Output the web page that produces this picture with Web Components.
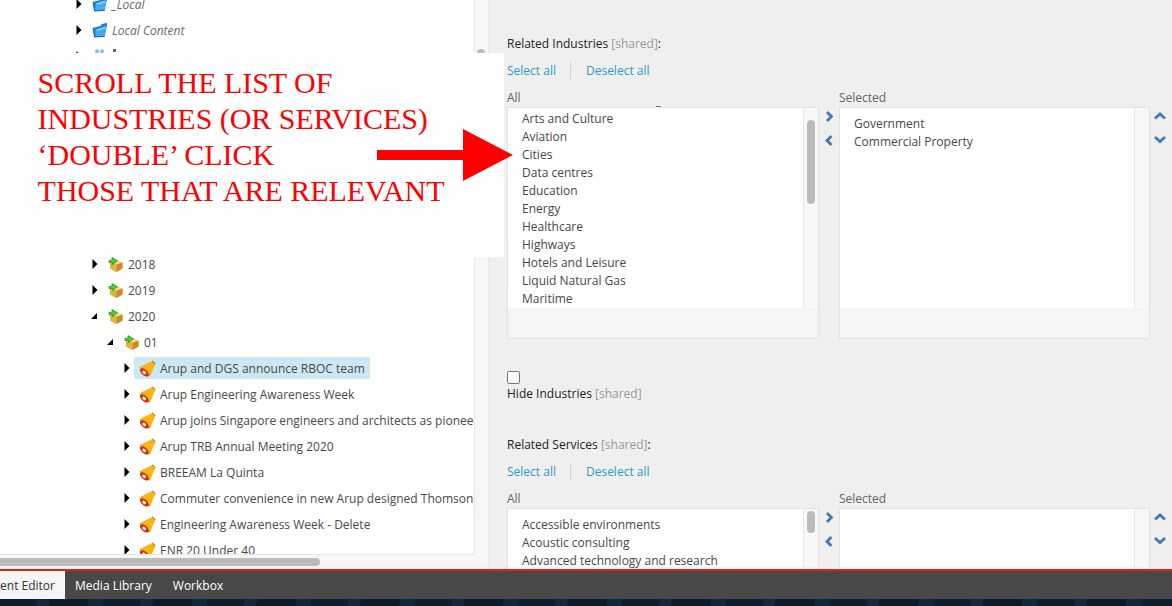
<!DOCTYPE html>
<html><head><meta charset="utf-8">
<style>
html,body{margin:0;padding:0;height:606px;overflow:hidden;background:#0d2033}
body{font-family:"Open Sans",sans-serif;font-size:12px}
</style></head><body>
<app-shell>
  <tree-pane slot="left">
    <tree-row level="0" icon="folder" italic>_Local</tree-row>
    <tree-row level="0" icon="folder" italic>Local Content</tree-row>
    <tree-row level="0" icon="group" mark></tree-row>
    <tree-gap></tree-gap>
    <tree-row level="1" icon="box">2018</tree-row>
    <tree-row level="1" icon="box">2019</tree-row>
    <tree-row level="1" icon="box" open>2020</tree-row>
    <tree-row level="2" icon="box" open>01</tree-row>
    <tree-row level="3" icon="horn" selected>Arup and DGS announce RBOC team</tree-row>
    <tree-row level="3" icon="horn">Arup Engineering Awareness Week</tree-row>
    <tree-row level="3" icon="horn">Arup joins Singapore engineers and architects as pioneers</tree-row>
    <tree-row level="3" icon="horn">Arup TRB Annual Meeting 2020</tree-row>
    <tree-row level="3" icon="horn">BREEAM La Quinta</tree-row>
    <tree-row level="3" icon="horn">Commuter convenience in new Arup designed Thomson</tree-row>
    <tree-row level="3" icon="horn">Engineering Awareness Week - Delete</tree-row>
    <tree-row level="3" icon="horn">ENR 20 Under 40</tree-row>
  </tree-pane>
  <editor-pane slot="right">
    <dual-field name="Related Industries" thumb-top="12" thumb-height="84" list-pad="2"
      all="Arts and Culture|Aviation|Cities|Data centres|Education|Energy|Healthcare|Highways|Hotels and Leisure|Liquid Natural Gas|Maritime"
      selected="Government|Commercial Property"></dual-field>
    <check-field>Hide Industries</check-field>
    <dual-field name="Related Services" thumb-top="2" thumb-height="22" list-pad="7"
      all="Accessible environments|Acoustic consulting|Advanced technology and research"
      selected=""></dual-field>
  </editor-pane>
  <note-overlay slot="overlay">SCROLL THE LIST OF<br>INDUSTRIES (OR SERVICES)<br>‘DOUBLE’ CLICK<br>THOSE THAT ARE RELEVANT</note-overlay>
  <task-bar slot="bar"></task-bar>
</app-shell>
<script>
const ICONS={
folder:`<svg width="16" height="16" viewBox="0 0 16 16"><path d="M1 6 L2.6 15 L12.6 14.4 L15 3 L15 .8 L9.5 2.2 L9 3.8 L3.5 5.2 Z" fill="#1c7fdc"/><path d="M3.6 7.4 L14.8 3.6 L12.4 13.8 L3.4 14.6 Z" fill="#4ca8ee"/><path d="M4.6 8.2 L13.2 5.6" stroke="#a9dafa" stroke-width="1.2"/><path d="M1 6 L2.6 15 L12.6 14.4" fill="none" stroke="#0f63b8" stroke-width="1"/></svg>`,
group:`<svg width="16" height="16" viewBox="0 0 16 16"><path d="M2 6h12v8H2z" fill="#6fbdf2"/><circle cx="5" cy="3.2" r="2" fill="#7cc0f3"/><circle cx="10" cy="3.2" r="2" fill="#7cc0f3"/></svg>`,
box:`<svg width="15" height="15" viewBox="0 0 15 15"><path d="M2 5.5 L8 3 L14.5 5.5 L14.5 11.5 L8 15 L2 11.5 Z" fill="#e6b040"/><path d="M8.6 7.6 L14.5 5.5 L14.5 11.5 L8.6 15 Z" fill="#c68c26"/><path d="M2 5.5 L8.6 7.6 L14.5 5.5 L8 3 Z" fill="#f6d88a"/><path d="M1 3.4 H4 V.6 L9.4 3.8 L4.6 7.6 V5.6 H1 Z" fill="#43d23a" stroke="#17851a" stroke-width=".7"/></svg>`,
horn:`<svg width="17" height="18" viewBox="0 0 17 18" style="margin-top:1px"><path d="M13.4 .6 L16.6 3.6 L15.6 4.4 L12.8 1.6 Z" fill="#8a5312"/><path d="M13.2 1.4 L15.8 4 L10.6 16.6 L.8 7.6 Z" fill="#fbb60d" stroke="#ee9f00" stroke-width=".6"/><ellipse cx="5.4" cy="12.4" rx="5.4" ry="2.9" transform="rotate(42 5.4 12.4)" fill="#d1300e"/><ellipse cx="5.2" cy="12.4" rx="2.2" ry="1.4" transform="rotate(42 5.2 12.4)" fill="#fbf1e6"/></svg>`
};
function def(name,html){customElements.define(name,class extends HTMLElement{connectedCallback(){if(this.shadowRoot)return;this.attachShadow({mode:'open'}).innerHTML=typeof html==='function'?html(this):html;}});}

def('app-shell',`<style>
:host{display:grid;grid-template-columns:490px 1fr;grid-template-rows:569px 2px 28px 7px;width:1172px;height:606px;position:relative;overflow:hidden}
.r{grid-column:2;grid-row:1;min-width:0;overflow:hidden}
.l{grid-column:1;grid-row:1;min-width:0}
.line{grid-column:1/3;grid-row:2;background:#e02020}
.b{grid-column:1/3;grid-row:3}
.sky{grid-column:1/3;grid-row:4;background:repeating-linear-gradient(97deg,#0c1f32 0 37px,#12293f 37px 49px,#0a1b2c 49px 88px,#10283c 88px 103px)}
</style>
<div class="l"><slot name="left"></slot></div>
<div class="r"><slot name="right"></slot></div>
<div class="line"></div>
<div class="b"><slot name="bar"></slot></div>
<div class="sky"></div>
<slot name="overlay"></slot>`);

def('tree-pane',`<style>
:host{display:grid;grid-template-columns:475px 13px 2px;grid-template-rows:555px 14px;height:569px;background:#f7f7f7}
.view{background:#fff;border-right:1px solid #e6e6e6;border-bottom:1px solid #e6e6e6;overflow:hidden;min-width:0}
.tree{margin-top:-9px}
.v{padding:49px 0 0 2px}
.v i{display:block;width:8px;height:100px;background:#bbb;border-radius:4px}
.split{grid-column:3;grid-row:1/3;background:#e9e9e9}
.h{grid-column:1/3;padding-top:3px;overflow:hidden}
.h i{display:block;width:320px;height:8px;background:#bbb;border-radius:0 4px 4px 0}
</style>
<div class="view"><div class="tree"><slot></slot></div></div>
<div class="v"><i></i></div>
<div class="split"></div>
<div class="h"><i></i></div>`);

def('tree-gap',`<style>:host{display:block;height:182px}</style>`);

def('tree-row',el=>{
 const lv=+el.getAttribute('level');
 const open=el.hasAttribute('open'),sel=el.hasAttribute('selected'),it=el.hasAttribute('italic');
 const ic=el.getAttribute('icon');
 const tri=open?`<svg width="6" height="6" viewBox="0 0 6 6"><path d="M0 6 L6 6 L6 0 Z" fill="#000"/></svg>`:`<svg width="6" height="10" viewBox="0 0 6 10"><path d="M0.5 0 L5.5 5 L0.5 10 Z" fill="#000"/></svg>`;
 const textLeft=[112,128,144,160][lv];
 const arrowLeft=[76,92,108,124][lv]-(open?1:0);
 const iconLeft=[92,108,124,139][lv];
 return `<style>
 :host{display:block;height:26px;white-space:nowrap;color:#494949}
 .row{display:flex;align-items:center;height:26px;padding-left:${arrowLeft}px}
 .a{width:6px;display:flex;justify-content:center;flex:none}
 .hl{display:flex;align-items:center;height:22px;margin-left:${iconLeft-arrowLeft-6-(lv==3?5:0)}px;padding:0 5px 0 ${lv==3?5:0}px;${sel?'background:#cde8f3;':''}}
 .ic{width:${textLeft-iconLeft}px;display:flex;flex:none;align-items:center}
 .t{${it?'font-style:italic;color:#6a6a6a;':''}font-size:12px;line-height:18px;padding-top:2px}
 .m{display:block;width:3px;height:3px;background:#666;margin:-11px 0 0 1px}
 </style><div class="row"><span class="a">${tri}</span><span class="hl"><span class="ic">${ICONS[ic]}</span><span class="t"><slot></slot></span>${el.hasAttribute('mark')?'<i class="m"></i>':''}</span></div>`});

def('editor-pane',`<style>:host{display:block;background:#efefef;height:569px;padding:35px 0 0 17px;box-sizing:border-box;color:#333;overflow:hidden}</style><slot></slot>`);

def('dual-field',el=>{
 const a=(el.getAttribute('all')||'').split('|').filter(Boolean);
 const s=(el.getAttribute('selected')||'').split('|').filter(Boolean);
 const chev={r:'M2 1 L6.4 5.5 L2 10',l:'M6.4 1 L2 5.5 L6.4 10',u:'M1 6.5 L6 2 L11 6.5',d:'M1 2 L6 6.5 L11 2'};
 const btn=(d,w,h)=>`<svg width="${w}" height="${h}" viewBox="0 0 ${w} ${h}"><path d="${chev[d]}" fill="none" stroke="#3f7ab8" stroke-width="2.8"/></svg>`;
 const pad=el.getAttribute('list-pad');
 return `<style>
 :host{display:block;font-size:12px}
 .head{line-height:18px;color:#222}.head span{color:#999}
 .links{display:flex;align-items:center;margin-top:8px;height:18px;color:#2b9ac9}
 .links b{font-weight:400}
 .sep{width:1px;height:17px;background:#d4d4d4;margin:0 15px 0 14px}
 .cols{display:grid;grid-template-columns:312px 20px 310px 23px;margin-top:10px}
 .cap{line-height:18px;color:#666}
 .box{border:1px solid #e2e2e2;background:#f5f5f5;height:230px;overflow:hidden}
 .in{display:flex;height:200px}
 .list{flex:1;background:#fff;padding-left:14px;color:#474747;line-height:18px;overflow:hidden;box-sizing:border-box}
 .track{width:14px;background:#f8f8f8;border-left:1px solid #e8e8e8;flex:none}
 .thumb{width:8px;background:#bbb;border-radius:4px;margin-left:3px}
 .btns{display:flex;flex-direction:column;align-items:center;padding-top:22px;gap:13px}
 .btns svg{display:block}
 .btns.ud{align-items:flex-start;padding-left:5px;padding-top:23px;gap:14px}
 </style>
 <div class="head">${el.getAttribute('name')} <span>[shared]</span>:</div>
 <div class="links"><b>Select all</b><i class="sep"></i><b>Deselect all</b></div>
 <div class="cols">
  <div><div class="cap">All</div><div class="box" style="width:310px"><div class="in"><div class="list" style="padding-top:${pad}px">${a.map(x=>`<div>${x}</div>`).join('')}</div><div class="track"><div class="thumb" style="margin-top:${el.getAttribute('thumb-top')}px;height:${el.getAttribute('thumb-height')}px"></div></div></div></div></div>
  <div class="btns">${btn('r',9,11)}${btn('l',9,11)}</div>
  <div><div class="cap">Selected</div><div class="box" style="width:309px"><div class="in"><div class="list" style="padding-top:7px">${s.map(x=>`<div>${x}</div>`).join('')}</div><div class="track"></div></div></div></div>
  <div class="btns ud">${btn('u',12,9)}${btn('d',12,9)}</div>
 </div>`});

def('check-field',`<style>
:host{display:block;margin:32px 0 33px;font-size:12px;color:#222}
i{display:block;width:11px;height:11px;border:1px solid #767676;border-radius:2px;background:#fff;margin-bottom:1px}
div{line-height:18px}span{color:#999}
</style><i></i><div><slot></slot> <span>[shared]</span></div>`);

def('note-overlay',`<style>
:host{position:absolute;left:0;top:53px;width:504px;height:204px;background:#fff;color:#f00;font-family:"Liberation Serif",serif;font-size:30px;letter-spacing:-.03px;line-height:36px;box-sizing:border-box;padding:12px 0 0 37.6px;white-space:nowrap}
svg{position:absolute;left:377px;top:76px;overflow:visible}
</style><slot></slot><svg width="136" height="52" viewBox="0 0 136 52"><path d="M0 21 H86 V0 L136 26 L86 52 V31 H0 Z" fill="#f00"/><rect x="279" y="-23" width="5" height="1" fill="#777"/></svg>`);

def('task-bar',`<style>
:host{display:flex;height:28px;background:#484848;color:#fff;font-size:12px;align-items:stretch}
.tab{display:flex;align-items:center;padding:0 10px}
.on{background:#f5f5f5;color:#333;width:65px;box-sizing:border-box;justify-content:flex-end;overflow:hidden;white-space:nowrap}
.mid{padding-right:11px}
</style><div class="tab on">Content Editor</div><div class="tab mid">Media Library</div><div class="tab">Workbox</div>`);
</script>
</body></html>
